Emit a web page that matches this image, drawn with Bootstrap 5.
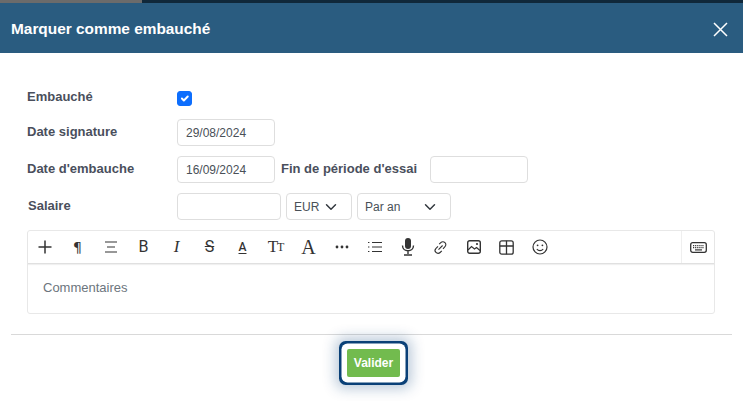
<!DOCTYPE html>
<html lang="fr">
<head>
  <meta charset="UTF-8" />
  <title>Marquer comme embauché</title>
  <link href="https://cdn.jsdelivr.net/npm/bootstrap@5.3.2/dist/css/bootstrap.min.css" rel="stylesheet" />
  <style>
    html, body { height: 401px; overflow: hidden; }
    body { font-family: "Liberation Sans", Arial, sans-serif; background: #fff; }
    .top-strip { height: 3px; background: #10283a; }
    .top-strip div { width: 142px; height: 3px; background: #6b6b6b; }
    .hire-header { height: 50px; background: #2a5c80; color: #fff; padding: 2px 15px 0 11px; }
    .hire-header h5 { font-size: 15.4px; font-weight: 700; margin: 0; }
    .close-x { width: 15px; height: 15px; padding: 0; border: 0; background: none; display: flex; }
    .hire-body { padding: 36px 28px 0 27px; }
    .hire-row { height: 27px; margin-bottom: 10px; }
    .hire-label { width: 150px; flex: none; font-size: 13px; font-weight: 700; color: #4a4f5c; margin-bottom: 2px; }
    .hire-row .form-control, .hire-row .form-select {
      height: 27px; min-height: 0; font-size: 12px; color: #495057; border-color: #dedede;
      border-radius: 4px; padding: 0 8px; box-shadow: none;
    }
    .hire-row .form-select { padding-left: 7px; }
    .w-date { width: 98px; }
    .w-sal { width: 104px; }
    .w-cur { width: 66px; margin-left: 5px; }
    .w-per { width: 94px; margin-left: 5px; }
    .row-check { height: 17px; margin-bottom: 13px; }
    .row-check .form-check-input { width: 15px; height: 15px; margin: 1px 0 0; border-radius: 3px; }
    .trial-label { font-size: 13px; font-weight: 700; color: #4a4f5c; width: 155px; flex: none; padding-left: 6px; margin-bottom: 2px; }
    .salary-label { padding-left: 1px; }
    .editor-box { border: 1px solid #e8e8e8; border-radius: 3px; height: 84px; margin-top: 1px; }
    .editor-bar { height: 33px; border-bottom: 1px solid #e0e0e0; box-shadow: 0 1px 1px rgba(0,0,0,.06); }
    .tool { width: 33px; height: 32px; flex: none; color: #333; display: flex; align-items: center; justify-content: center; }
    .tool svg { display: block; }
    .tool-txt { font-family: "DejaVu Sans", sans-serif; font-size: 14px; line-height: 1; }
    .tool-b { font-family: Roboto, sans-serif; font-size: 16px; }
    .tool-i { font-family: "Liberation Serif", serif; font-style: italic; font-size: 17px; }
    .tool-s { font-family: Roboto, sans-serif; font-size: 16px; text-decoration: line-through; }
    .tool-a { font-family: Roboto, sans-serif; font-size: 12px; font-weight: 500; text-decoration: underline; text-underline-offset: 2px; }
    .tool-t { font-family: "Liberation Serif", serif; font-size: 17px; letter-spacing: -1px; }
    .tool-t small { font-size: 12px; }
    .tool-f { font-family: "Liberation Serif", serif; font-size: 20px; }
    .tool-end { margin-left: auto; border-left: 1px solid #efefef; }
    .editor-text { padding: 14px 15px; font-size: 13px; color: #6c757d; }
    .hire-rule { margin: 20px 11px 0; border: 0; border-top: 1px solid #d9d9d9; opacity: 1; }
    .hire-foot { padding: 14px 0 0 4px; }
    .btn-valider {
      background: #72bb4e; border: 0; color: #fff; font-size: 12px; font-weight: 700; width: 53px; height: 28px; padding: 0;
      border-radius: 2px; box-shadow: 0 0 0 5.5px #fff, 0 0 0 8px #0a4077, 0 0 14px 11px rgba(10,64,119,.3);
    }
  </style>
</head>
<body>
  <div class="top-strip"><div></div></div>
  <div class="hire-header d-flex align-items-center justify-content-between">
    <h5>Marquer comme embauché</h5>
    <button type="button" class="close-x" aria-label="Fermer">
      <svg width="15" height="15" viewBox="0 0 15 15"><path d="M1 1l13 13M14 1l-13 13" stroke="#fff" stroke-width="1.5" fill="none"/></svg>
    </button>
  </div>

  <form class="hire-body">
    <div class="d-flex align-items-center row-check">
      <label class="hire-label" for="embauche">Embauché</label>
      <input class="form-check-input" type="checkbox" id="embauche" checked />
    </div>
    <div class="d-flex align-items-center hire-row">
      <label class="hire-label">Date signature</label>
      <input class="form-control w-date" value="29/08/2024" />
    </div>
    <div class="d-flex align-items-center hire-row">
      <label class="hire-label">Date d'embauche</label>
      <input class="form-control w-date" value="16/09/2024" />
      <label class="trial-label">Fin de période d'essai</label>
      <input class="form-control w-date" />
    </div>
    <div class="d-flex align-items-center hire-row">
      <label class="hire-label salary-label">Salaire</label>
      <input class="form-control w-sal" />
      <select class="form-select w-cur"><option>EUR</option></select>
      <select class="form-select w-per"><option>Par an</option></select>
    </div>

    <div class="editor-box">
      <div class="editor-bar d-flex">
        <div class="tool"><svg width="16" height="16" viewBox="0 0 16 16"><path d="M8 1.5v13M1.5 8h13" stroke="#333" stroke-width="1.5" fill="none"/></svg></div>
        <div class="tool tool-txt">¶</div>
        <div class="tool"><svg width="14" height="12" viewBox="0 0 14 12"><path d="M1 1h12M3 6h8M1 11h12" stroke="#333" stroke-width="1.2" fill="none"/></svg></div>
        <div class="tool tool-b">B</div>
        <div class="tool tool-i">I</div>
        <div class="tool tool-s">S</div>
        <div class="tool tool-a">A</div>
        <div class="tool tool-t">T<small>T</small></div>
        <div class="tool tool-f">A</div>
        <div class="tool"><svg width="14" height="4" viewBox="0 0 14 4"><circle cx="2" cy="2" r="1.4" fill="#333"/><circle cx="7" cy="2" r="1.4" fill="#333"/><circle cx="12" cy="2" r="1.4" fill="#333"/></svg></div>
        <div class="tool"><svg width="14" height="12" viewBox="0 0 14 12"><path d="M4 1.5h10M4 6h10M4 10.5h10" stroke="#333" stroke-width="1.2" fill="none"/><path d="M0 1.5h2M0 6h2M0 10.5h2" stroke="#333" stroke-width="1.2" stroke-dasharray="1 .6" fill="none"/></svg></div>
        <div class="tool"><svg width="14" height="18" viewBox="0 0 14 18"><rect x="4" y="0" width="6" height="11" rx="3" fill="#333"/><path d="M1.5 7.5c0 7 11 7 11 0M7 13v3M3 17h8" stroke="#333" stroke-width="1.4" fill="none"/></svg></div>
        <div class="tool"><svg width="15" height="15" viewBox="0 0 15 15"><path d="M6.2 4.2l1.6-1.6a2.9 2.9 0 0 1 4.2 4.1L10 8.8M8.8 10.8l-1.7 1.7A2.9 2.9 0 0 1 3 8.3L5 6.3M5.5 9.6l4.1-4.1" stroke="#333" stroke-width="1.1" fill="none"/></svg></div>
        <div class="tool"><svg width="14" height="14" viewBox="0 0 14 14"><rect x=".7" y=".7" width="12.6" height="12.6" rx="2" stroke="#333" stroke-width="1.4" fill="none"/><path d="M1 10l3.5-3.5 3 2.5 2-1.5 3.5 3" stroke="#333" stroke-width="1.2" fill="none"/><circle cx="10" cy="4" r="1.1" fill="#333"/></svg></div>
        <div class="tool"><svg width="15" height="15" viewBox="0 0 15 15"><rect x=".8" y=".8" width="13.4" height="13.4" rx="2" stroke="#333" stroke-width="1.3" fill="none"/><path d="M.8 6h13.4M7.5 .8v13.4" stroke="#333" stroke-width="1.3" fill="none"/></svg></div>
        <div class="tool"><svg width="16" height="16" viewBox="0 0 16 16"><circle cx="8" cy="8" r="7" stroke="#333" stroke-width="1.2" fill="none"/><circle cx="5.6" cy="6.3" r=".9" fill="#333"/><circle cx="10.4" cy="6.3" r=".9" fill="#333"/><path d="M4.8 10c1.6 2.2 4.8 2.2 6.4 0" stroke="#333" stroke-width="1.1" fill="none"/></svg></div>
        <div class="tool tool-end"><svg width="17" height="11" viewBox="0 0 17 11"><rect x=".7" y=".7" width="15.6" height="9.6" rx="2" stroke="#333" stroke-width="1.3" fill="none"/><path d="M3 3.6h11" stroke="#333" stroke-width="1.2" stroke-dasharray="1.2 .9" fill="none"/><path d="M3 5.6h11" stroke="#333" stroke-width="1.2" stroke-dasharray="1.2 .9" fill="none"/><path d="M5 7.9h7" stroke="#333" stroke-width="1.2" fill="none"/></svg></div>
      </div>
      <div class="editor-text">Commentaires</div>
    </div>
  </form>

  <hr class="hire-rule" />
  <div class="hire-foot d-flex justify-content-center">
    <button type="button" class="btn btn-valider">Valider</button>
  </div>

  <script src="https://cdn.jsdelivr.net/npm/bootstrap@5.3.2/dist/js/bootstrap.bundle.min.js"></script>
</body>
</html>
